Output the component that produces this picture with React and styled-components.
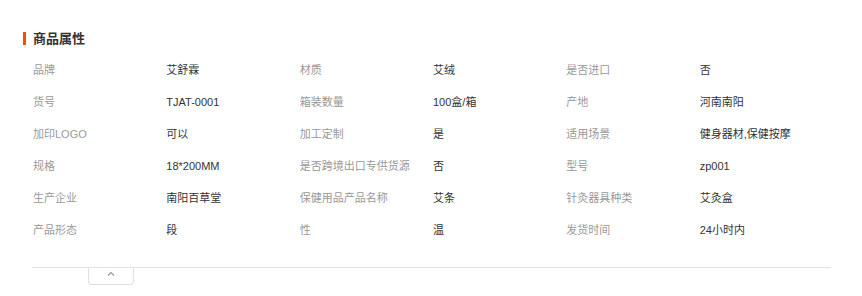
import styled, { createGlobalStyle } from "styled-components"

const GlobalStyle = createGlobalStyle`
  body {
    margin: 0;
    background: #fff;
    font-family: "Liberation Sans", "Noto Sans CJK SC", sans-serif;
  }
`

const Container = styled.div`
  width: 862px;
  height: 296px;
  padding-top: 32px;
  box-sizing: border-box;
`
const Title = styled.h3`
  margin: 0 0 9px 23px;
  padding-left: 7px;
  border-left: 3px solid #ff4a00;
  height: 13px;
  line-height: 13px;
  font-size: 13px;
  font-weight: bold;
  color: #333;
`
const Grid = styled.div`
  display: grid;
  grid-template-columns: repeat(6, 1fr);
  grid-auto-rows: 32px;
  width: 800px;
  margin-left: 33px;
`
const Cell = styled.div`
  line-height: 32px;
  font-size: 11px;
  white-space: nowrap;
  color: ${(props) => (props.label ? "#999" : "#333")};
`
const Footer = styled.div`
  margin: 21px 0 0 32px;
  width: 799px;
  border-top: 1px solid #e3e3e3;
`
const Toggle = styled.div`
  margin-left: 56px;
  width: 46px;
  height: 17px;
  border: 1px solid #e0e0e0;
  border-top: none;
  border-radius: 0 0 4px 4px;
  display: flex;
  justify-content: center;
  padding-top: 3px;
  box-sizing: border-box;
`

const rows = [
  ["品牌", "艾舒霖", "材质", "艾绒", "是否进口", "否"],
  ["货号", "TJAT-0001", "箱装数量", "100盒/箱", "产地", "河南南阳"],
  ["加印LOGO", "可以", "加工定制", "是", "适用场景", "健身器材,保健按摩"],
  ["规格", "18*200MM", "是否跨境出口专供货源", "否", "型号", "zp001"],
  ["生产企业", "南阳百草堂", "保健用品产品名称", "艾条", "针灸器具种类", "艾灸盒"],
  ["产品形态", "段", "性", "温", "发货时间", "24小时内"],
]

const App = () => {
  return (
    <Container>
      <GlobalStyle />
      <Title>商品属性</Title>
      <Grid>
        {rows.map((row, i) =>
          row.map((text, j) => (
            <Cell key={i + "-" + j} label={j % 2 === 0 ? 1 : 0}>
              {text}
            </Cell>
          ))
        )}
      </Grid>
      <Footer>
        <Toggle>
          <svg width="8" height="5" viewBox="0 0 8 5">
            <path d="M1 4.5 L4 1.5 L7 4.5" fill="none" stroke="#999" strokeWidth="1.2" />
          </svg>
        </Toggle>
      </Footer>
    </Container>
  )
}

export default App
